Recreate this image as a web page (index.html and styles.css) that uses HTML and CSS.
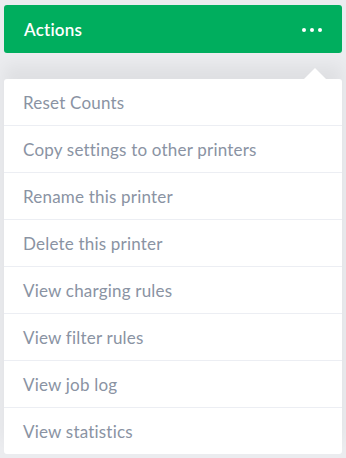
FILE: index.html
```html
<!DOCTYPE html>
<html lang="en">
<head>
    <meta charset="UTF-8">
    <meta name="viewport" content="width=device-width, initial-scale=1.0">
    <title>Actions</title>
    <link rel="stylesheet" href="styles.css">
</head>
<body>
    <div class="panel">
        <div class="actions-bar">
            <span class="title">Actions</span>
            <span class="dots"><i></i><i></i><i></i></span>
        </div>

        <div class="menu">
            <a href="#">Reset Counts</a>
            <a href="#">Copy settings to other printers</a>
            <a href="#">Rename this printer</a>
            <a href="#">Delete this printer</a>
            <a href="#">View charging rules</a>
            <a href="#">View filter rules</a>
            <a href="#">View job log</a>
            <a href="#">View statistics</a>
        </div>
    </div>
</body>
</html>
```

FILE: styles.css
```css
* {
    margin: 0;
    padding: 0;
    box-sizing: border-box;
    font-family: Lato, 'Open Sans', Arial, sans-serif;
}

body {
    background-color: #ebecef;
}

a {
    text-decoration: none;
}

.panel {
    padding: 5px 4px 3px;
}

.actions-bar {
    display: flex;
    justify-content: space-between;
    align-items: center;
    height: 48px;
    padding: 0 20px;
    background: #00ae5e;
    border-radius: 3px;
    color: #ffffff;
}

.title {
    font-size: 17px;
    font-weight: 600;
    letter-spacing: 0.2px;
}

.dots {
    display: flex;
    gap: 4px;
    padding-top: 1px;
}

.dots i {
    width: 4px;
    height: 4px;
    border-radius: 50%;
    background: #ffffff;
}

.menu {
    position: relative;
    margin-top: 26px;
    background: #ffffff;
    border-radius: 3px;
    box-shadow: 0 -14px 16px rgba(0, 0, 0, 0.05);
    display: flex;
    flex-direction: column;
}

.menu::before {
    content: "";
    position: absolute;
    top: -11px;
    right: 16px;
    border-left: 11px solid transparent;
    border-right: 11px solid transparent;
    border-bottom: 11px solid #ffffff;
}

.menu a {
    display: flex;
    align-items: center;
    height: 47px;
    padding: 0 19px;
    font-size: 17px;
    letter-spacing: 0.2px;
    color: #8a93a3;
    border-top: 1px solid #eceef3;
}

.menu a:first-child {
    border-top: none;
    height: 46px;
}
```
